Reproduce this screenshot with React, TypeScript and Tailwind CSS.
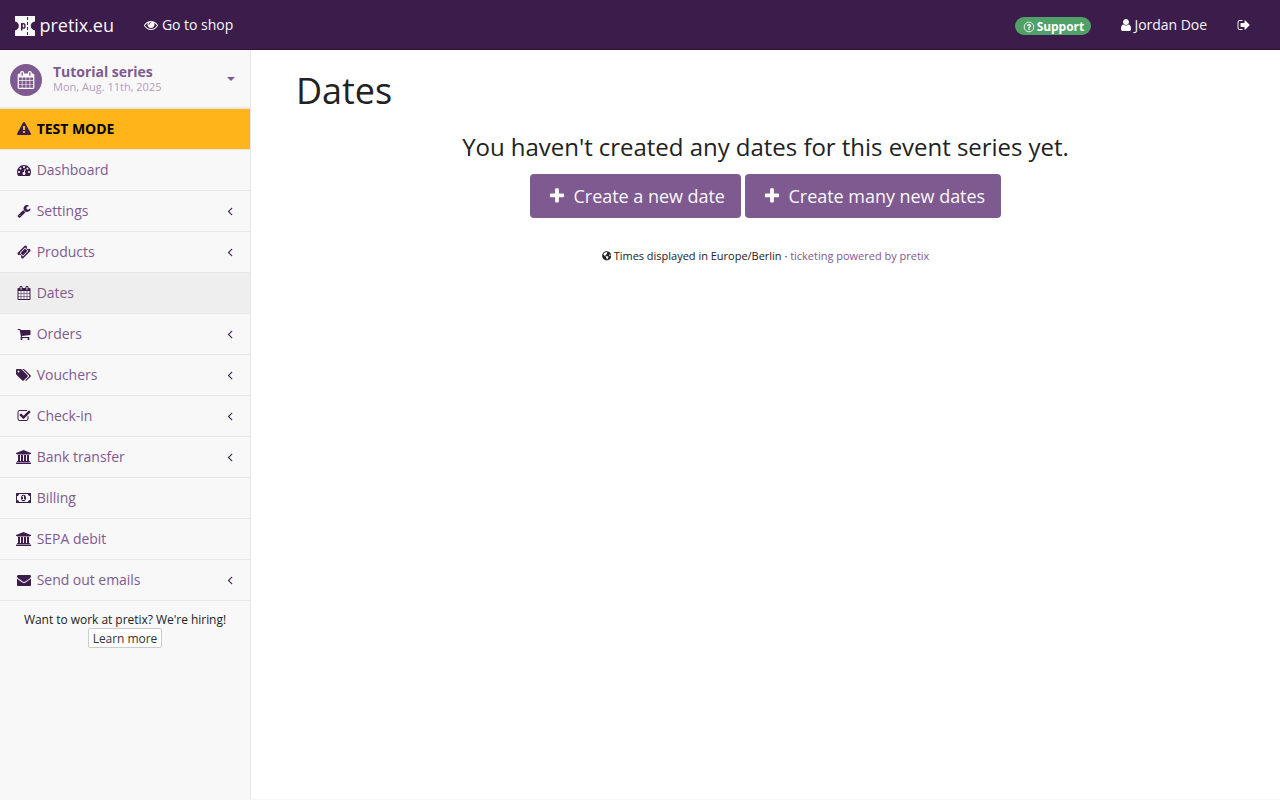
import React from 'react';
import { FaGlobeAmericas } from 'react-icons/fa';

type IconDef = { w: number; d: string };

const icons = {
  plus: { w: 1792, d: 'M1600 736v192q0 40-28 68t-68 28h-416v416q0 40-28 68t-68 28h-192q-40 0-68-28t-28-68v-416h-416q-40 0-68-28t-28-68v-192q0-40 28-68t68-28h416v-416q0-40 28-68t68-28h192q40 0 68 28t28 68v416h416q40 0 68 28t28 68z' },
  calendar: { w: 1792, d: 'M192 1664h288v-288h-288v288zm352 0h320v-288h-320v288zm-352-352h288v-320h-288v320zm352 0h320v-320h-320v320zm-352-384h288v-288h-288v288zm736 736h320v-288h-320v288zm-384-736h320v-288h-320v288zm768 736h288v-288h-288v288zm-384-352h320v-320h-320v320zm-352-864v-288q0-13-9.5-22.5t-22.5-9.5h-64q-13 0-22.5 9.5t-9.5 22.5v288q0 13 9.5 22.5t22.5 9.5h64q13 0 22.5-9.5t9.5-22.5zm736 864h288v-320h-288v320zm-384-384h320v-288h-320v288zm384 0h288v-288h-288v288zm32-480v-288q0-13-9.5-22.5t-22.5-9.5h-64q-13 0-22.5 9.5t-9.5 22.5v288q0 13 9.5 22.5t22.5 9.5h64q13 0 22.5-9.5t9.5-22.5zm384-64v1280q0 52-38 90t-90 38h-1408q-52 0-90-38t-38-90v-1280q0-52 38-90t90-38h128v-96q0-66 47-113t113-47h64q66 0 113 47t47 113v96h384v-96q0-66 47-113t113-47h64q66 0 113 47t47 113v96h128q52 0 90 38t38 90z' },
  user: { w: 1792, d: 'M1536 1399q0 109-62.5 187t-150.5 78h-854q-88 0-150.5-78t-62.5-187q0-85 8.5-160.5t31.5-152 58.5-131 94-89 134.5-34.5q131 128 313 128t313-128q76 0 134.5 34.5t94 89 58.5 131 31.5 152 8.5 160.5zm-256-887q0 159-112.5 271.5t-271.5 112.5-271.5-112.5-112.5-271.5 112.5-271.5 271.5-112.5 271.5 112.5 112.5 271.5z' },
  cart: { w: 1792, d: 'M704 1536q0 52-38 90t-90 38-90-38-38-90 38-90 90-38 90 38 38 90zm896 0q0 52-38 90t-90 38-90-38-38-90 38-90 90-38 90 38 38 90zm128-1088v512q0 24-16.5 42.5t-40.5 21.5l-1044 122q13 60 13 70 0 16-24 64h920q26 0 45 19t19 45-19 45-45 19h-1024q-26 0-45-19t-19-45q0-11 8-31.5t16-36 21.5-40 15.5-29.5l-177-823h-204q-26 0-45-19t-19-45 19-45 45-19h256q16 0 28.5 6.5t19.5 15.5 13 24.5 8 26 5.5 29.5 4.5 26h1201q26 0 45 19t19 45z' },
  check: { w: 1792, d: 'M1472 930v318q0 119-84.5 203.5t-203.5 84.5h-832q-119 0-203.5-84.5t-84.5-203.5v-832q0-119 84.5-203.5t203.5-84.5h832q63 0 117 25 15 7 18 23 3 17-9 29l-49 49q-10 10-23 10-3 0-9-2-23-6-45-6h-832q-66 0-113 47t-47 113v832q0 66 47 113t113 47h832q66 0 113-47t47-113v-254q0-13 9-22l64-64q10-10 23-10 6 0 12 3 20 8 20 29zm231-489l-814 814q-24 24-57 24t-57-24l-430-430q-24-24-24-57t24-57l110-110q24-24 57-24t57 24l263 263 647-647q24-24 57-24t57 24l110 110q24 24 24 57t-24 57z' },
  dashboard: { w: 1792, d: 'M384 1152q0-53-37.5-90.5t-90.5-37.5-90.5 37.5-37.5 90.5 37.5 90.5 90.5 37.5 90.5-37.5 37.5-90.5zm192-448q0-53-37.5-90.5t-90.5-37.5-90.5 37.5-37.5 90.5 37.5 90.5 90.5 37.5 90.5-37.5 37.5-90.5zm428 481l101-382q6-26-7.5-48.5t-38.5-29.5-48 6.5-30 39.5l-101 382q-60 5-107 43.5t-63 98.5q-20 77 20 146t117 89 146-20 89-117q16-60-6-117t-72-91zm660-33q0-53-37.5-90.5t-90.5-37.5-90.5 37.5-37.5 90.5 37.5 90.5 90.5 37.5 90.5-37.5 37.5-90.5zm-640-640q0-53-37.5-90.5t-90.5-37.5-90.5 37.5-37.5 90.5 37.5 90.5 90.5 37.5 90.5-37.5 37.5-90.5zm448 192q0-53-37.5-90.5t-90.5-37.5-90.5 37.5-37.5 90.5 37.5 90.5 90.5 37.5 90.5-37.5 37.5-90.5zm320 448q0 261-141 483-19 29-54 29h-1402q-35 0-54-29-141-221-141-483 0-182 71-348t191-286 286-191 348-71 348 71 286 191 191 286 71 348z' },
  warning: { w: 1792, d: 'M1024 1375v-190q0-14-9.5-23.5t-22.5-9.5h-192q-13 0-22.5 9.5t-9.5 23.5v190q0 14 9.5 23.5t22.5 9.5h192q13 0 22.5-9.5t9.5-23.5zm-2-374l18-459q0-12-10-19-13-11-24-11h-220q-11 0-24 11-10 7-10 21l17 457q0 10 10 16.5t24 6.5h185q14 0 23.5-6.5t10.5-16.5zm-14-934l768 1408q35 63-2 126-17 29-46.5 46t-63.5 17h-1536q-34 0-63.5-17t-46.5-46q-37-63-2-126l768-1408q17-31 47-49t65-18 65 18 47 49z' },
  wrench: { w: 1792, d: 'M448 1472q0-26-19-45t-45-19-45 19-19 45 19 45 45 19 45-19 19-45zm644-420l-682 682q-37 37-90 37-52 0-91-37l-106-108q-38-36-38-90 0-53 38-91l681-681q39 98 114.5 173.5t173.5 114.5zm634-435q0 39-23 106-47 134-164.5 217.5t-258.5 83.5q-185 0-316.5-131.5t-131.5-316.5 131.5-316.5 316.5-131.5q58 0 121.5 16.5t107.5 46.5q16 11 16 28t-16 28l-293 169v224l193 107q5-3 79-48.5t135.5-81 70.5-35.5q15 0 23.5 10t8.5 25z' },
  ticket: { w: 1792, d: 'M1024 452l316 316-572 572-316-316zm-211 979l618-618q19-19 19-45t-19-45l-362-362q-18-18-45-18t-45 18l-618 618q-19 19-19 45t19 45l362 362q18 18 45 18t45-18zm889-637l-907 908q-37 37-90.5 37t-90.5-37l-126-126q56-56 56-136t-56-136-136-56-136 56l-125-126q-37-37-37-90.5t37-90.5l907-906q37-37 90.5-37t90.5 37l125 125q-56 56-56 136t56 136 136 56 136-56l126 125q37 37 37 90.5t-37 90.5z' },
  tags: { w: 1920, d: 'M448 448q0-53-37.5-90.5t-90.5-37.5-90.5 37.5-37.5 90.5 37.5 90.5 90.5 37.5 90.5-37.5 37.5-90.5zm1067 576q0 53-37 90l-491 492q-39 37-91 37-53 0-90-37l-715-716q-38-37-64.5-101t-26.5-117v-416q0-52 38-90t90-38h416q53 0 117 26.5t102 64.5l715 714q37 39 37 91zm384 0q0 53-37 90l-491 492q-39 37-91 37-36 0-59-14t-53-45l470-470q37-37 37-90 0-52-37-91l-715-714q-38-38-102-64.5t-117-26.5h224q53 0 117 26.5t102 64.5l715 714q37 39 37 91z' },
  bank: { w: 1920, d: 'M960 0l960 384v128h-128q0 26-20.5 45t-48.5 19h-1526q-28 0-48.5-19t-20.5-45h-128v-128zm-704 640h256v768h128v-768h256v768h128v-768h256v768h128v-768h256v768h59q28 0 48.5 19t20.5 45v64h-1664v-64q0-26 20.5-45t48.5-19h59v-768zm1595 960q28 0 48.5 19t20.5 45v128h-1920v-128q0-26 20.5-45t48.5-19h1782z' },
  money: { w: 1920, d: 'M768 1152h384v-96h-128v-448h-114l-148 137 77 80q42-37 55-57h2v288h-128v96zm512-256q0 70-21 142t-59.5 134-101.5 101-138 39-138-39-101.5-101-59.5-134-21-142 21-142 59.5-134 101.5-101 138-39 138 39 101.5 101 59.5 134 21 142zm512 256v-512q-106 0-181-75t-75-181h-1152q0 106-75 181t-181 75v512q106 0 181 75t75 181h1152q0-106 75-181t181-75zm128-832v1152q0 26-19 45t-45 19h-1792q-26 0-45-19t-19-45v-1152q0-26 19-45t45-19h1792q26 0 45 19t19 45z' },
  envelope: { w: 1792, d: 'M1792 710v794q0 66-47 113t-113 47h-1472q-66 0-113-47t-47-113v-794q44 49 101 87 362 246 497 345 57 42 92.5 65.5t94.5 48 110 24.5h2q51 0 110-24.5t94.5-48 92.5-65.5q170-123 498-345 57-39 100-87zm0-294q0 79-49 151t-122 123q-376 261-468 325-10 7-42.5 31t-54 38.5-52 32.5-57.5 27-50 9h-2q-23 0-50-9t-57.5-27-52-32.5-54-38.5-42.5-31q-91-64-262-182.5t-205-142.5q-62-42-117-115.5t-55-136.5q0-78 41.5-130t118.5-52h1472q65 0 112.5 47t47.5 113z' },
  angle: { w: 1792, d: 'M1203 544q0 13-10 23l-393 393 393 393q10 10 10 23t-10 23l-50 50q-10 10-23 10t-23-10l-466-466q-10-10-10-23t10-23l466-466q10-10 23-10t23 10l50 50q10 10 10 23z' },
  eye: { w: 1792, d: 'M1664 960q-152-236-381-353 61 104 61 225 0 185-131.5 316.5t-316.5 131.5-316.5-131.5-131.5-316.5q0-121 61-225-229 117-381 353 133 205 333.5 326.5t434.5 121.5 434.5-121.5 333.5-326.5zm-720-384q0-20-14-34t-34-14q-125 0-214.5 89.5t-89.5 214.5q0 20 14 34t34 14 34-14 14-34q0-86 61-147t147-61q20 0 34-14t14-34zm848 384q0 34-20 69-140 230-376.5 368.5t-499.5 138.5-499.5-139-376.5-368q-20-35-20-69t20-69q140-229 376.5-368t499.5-139 499.5 139 376.5 368q20 35 20 69z' },
  signOut: { w: 1792, d: 'M704 1440q0 4 1 20t.5 26.5-3 23.5-10 19.5-20.5 6.5h-320q-119 0-203.5-84.5t-84.5-203.5v-704q0-119 84.5-203.5t203.5-84.5h320q13 0 22.5 9.5t9.5 22.5q0 4 1 20t.5 26.5-3 23.5-10 19.5-20.5 6.5h-320q-66 0-113 47t-47 113v704q0 66 47 113t113 47h312l11.5 1 11.5 3 8 5.5 7 9 2 13.5zm928-544q0 26-19 45l-544 544q-19 19-45 19t-45-19-19-45v-288h-448q-26 0-45-19t-19-45v-384q0-26 19-45t45-19h448v-288q0-26 19-45t45-19 45 19l544 544q19 19 19 45z' },
} satisfies Record<string, IconDef>;

type IconName = keyof typeof icons;

function Icon({ name, size = 14, className = '' }: { name: IconName; size?: number; className?: string }) {
  const { w, d } = icons[name];
  return (
    <svg className={`shrink-0 ${className}`} width={(size * w) / 1792} height={size} viewBox={`0 0 ${w} 1792`} fill="currentColor" aria-hidden="true">
      <path d={d} />
    </svg>
  );
}

function QuestionIcon() {
  return (
    <svg className="shrink-0" width="12" height="12" viewBox="0 0 1792 1792" fill="currentColor" aria-hidden="true">
      <circle cx="896" cy="896" r="720" fill="none" stroke="currentColor" strokeWidth="128" />
      <path transform="translate(134 134) scale(.85)" d="M1024 1376v-192q0-14-9-23t-23-9h-192q-14 0-23 9t-9 23v192q0 14 9 23t23 9h192q14 0 23-9t9-23zm256-672q0-88-55.5-163t-138.5-116-170-41q-243 0-371 213-15 24 8 42l132 100q7 6 19 6 16 0 25-12 53-68 86-92 34-24 86-24 48 0 85.5 26t37.5 59q0 38-20 61t-68 45q-63 28-115.5 86.5t-52.5 125.5v36q0 14 9 23t23 9h192q14 0 23-9t9-23q0-19 21.5-49.5t54.5-49.5q32-18 49-28.5t46-35 44.5-48 28-60.5 12.5-81z" />
    </svg>
  );
}

function Logo() {
  return (
    <svg className="shrink-0" width="20" height="20" viewBox="0 0 20 20" aria-hidden="true">
      <path fill="#f8f8f8" d="M0 0H20V5.6C17.2 6 15.8 7.8 15.8 10S17.2 14 20 14.4V20H0V14.4C2.5 14 3.8 12.2 3.8 10S2.5 6 0 5.6Z" />
      <path stroke="#3b1c4a" strokeWidth="1" strokeDasharray="3 2" strokeDashoffset="-1" d="M12.5 0V20" />
      <path stroke="#3b1c4a" strokeWidth="1.4" d="M6.7 7V14.6" />
      <ellipse cx="8.4" cy="9.9" rx="1.6" ry="2.2" fill="none" stroke="#3b1c4a" strokeWidth="1.3" />
    </svg>
  );
}

const items: { label: string; icon: IconName; sub?: boolean; active?: boolean }[] = [
  { label: 'Dashboard', icon: 'dashboard' },
  { label: 'Settings', icon: 'wrench', sub: true },
  { label: 'Products', icon: 'ticket', sub: true },
  { label: 'Dates', icon: 'calendar', active: true },
  { label: 'Orders', icon: 'cart', sub: true },
  { label: 'Vouchers', icon: 'tags', sub: true },
  { label: 'Check-in', icon: 'check', sub: true },
  { label: 'Bank transfer', icon: 'bank', sub: true },
  { label: 'Billing', icon: 'money' },
  { label: 'SEPA debit', icon: 'bank' },
  { label: 'Send out emails', icon: 'envelope', sub: true },
];

function Header() {
  return (
    <header className="flex h-[50px] items-center border-b border-[#2c1338] bg-[#3b1c4a] text-sm leading-5 text-[#f8f8f8]">
      <a className="ml-[15px] flex items-center gap-[4.5px] pt-[3px] text-lg leading-5">
        <Logo />
        <span className="-mt-[3px]">pretix.eu</span>
      </a>
      <a className="ml-[30px] flex items-center gap-1">
        <Icon name="eye" />
        <span>Go to shop</span>
      </a>
      <div className="ml-auto flex items-center">
        <a className="mt-[3px] flex h-[18px] w-[76px] items-center justify-center gap-[2px] rounded-full bg-[#50a167] pt-px text-xs font-bold text-white">
          <QuestionIcon />
          <span>Support</span>
        </a>
        <a className="ml-[28px] flex items-center gap-[1px]">
          <Icon name="user" />
          <span>Jordan Doe</span>
        </a>
        <a className="ml-[30px] mr-[29px] flex">
          <Icon name="signOut" />
        </a>
      </div>
    </header>
  );
}

function Sidebar() {
  return (
    <aside className="flex w-[251px] shrink-0 flex-col border-r border-[#e7e7e7] text-sm leading-5">
      <a className="flex h-[59px] items-center border-b-2 border-[#e7e7e7] pl-[10px] text-[#7f5a91]">
        <span className="mt-[3px] flex size-8 items-center justify-center rounded-full bg-[#7f5a91] text-[#f8f8f8]">
          <Icon name="calendar" size={18} />
        </span>
        <span className="ml-[11px] mt-px flex flex-col">
          <strong className="leading-[15px]">Tutorial series</strong>
          <span className="text-[11px] leading-[15px] tracking-normal text-[#b49dc0]">Mon, Aug. 11th, 2025</span>
        </span>
        <svg className="ml-auto mr-[15px]" width="8" height="4" viewBox="0 0 8 4" fill="currentColor" aria-hidden="true">
          <path d="M0 0H8L4 4Z" />
        </svg>
      </a>
      <a className="flex h-[41px] items-center border-b border-[#e7e7e7] bg-[#ffb419] pl-[15px] font-bold text-black">
        <span className="mr-[3.7px] flex w-[18px] justify-center text-[#3b1c4a]">
          <Icon name="warning" />
        </span>
        TEST MODE
      </a>
      <nav>
        {items.map((item) => (
          <a key={item.label} className={`flex h-[41px] items-center border-b border-[#e7e7e7] pl-[15px] text-[#7f5a91] ${item.active ? 'bg-[#eeeeee]' : ''}`}>
            <span className="mr-[3.7px] flex w-[18px] justify-center text-[#3b1c4a]">
              <Icon name={item.icon} className={icons[item.icon].w > 1792 ? 'mr-px' : ''} />
            </span>
            {item.label}
            {item.sub && <Icon name="angle" className="ml-auto mr-[13px] text-[#3b1c4a]" />}
          </a>
        ))}
      </nav>
      <div className="flex flex-col items-center pt-[10px] text-xs leading-[17px] tracking-[-0.003em] text-[#222222]">
        <span>Want to work at pretix? We're hiring!</span>
        <button className="flex h-5 w-[74px] items-center justify-center rounded-[2px] border border-[#cccccc] bg-white text-[#333333]">Learn more</button>
      </div>
    </aside>
  );
}

export default function App() {
  return (
    <div className="flex h-[800px] flex-col bg-[#f8f8f8] pb-px font-['Open_Sans',sans-serif] tracking-[-0.002em] text-[#222222]">
      <Header />
      <div className="flex min-h-0 flex-1">
        <Sidebar />
        <main className="flex-1 bg-white pl-[45px] pr-[45px]">
          <h1 className="mt-[21px] text-[36px] leading-[40px]">Dates</h1>
          <div className="flex flex-col items-center">
            <p className="mt-[23px] text-2xl leading-[26px]">You haven't created any dates for this event series yet.</p>
            <div className="mt-[14px] flex gap-1 text-lg text-[#f8f8f8]">
              <button className="flex h-11 w-[211px] items-center gap-[7.5px] rounded bg-[#7f5a91] pl-[18px]">
                <Icon name="plus" size={18} />
                <span>Create a new date</span>
              </button>
              <button className="flex h-11 w-[256px] items-center gap-[7.5px] rounded bg-[#7f5a91] pl-[18px]">
                <Icon name="plus" size={18} />
                <span>Create many new dates</span>
              </button>
            </div>
            <footer className="mt-[30px] flex items-center text-[11px] leading-4 tracking-[-0.001em]">
              <FaGlobeAmericas className="mr-[2.5px] size-[9.5px]" />
              <span>
                Times displayed in Europe/Berlin · <a className="text-[#7f5a91]">ticketing powered by pretix</a>
              </span>
            </footer>
          </div>
        </main>
      </div>
    </div>
  );
}
